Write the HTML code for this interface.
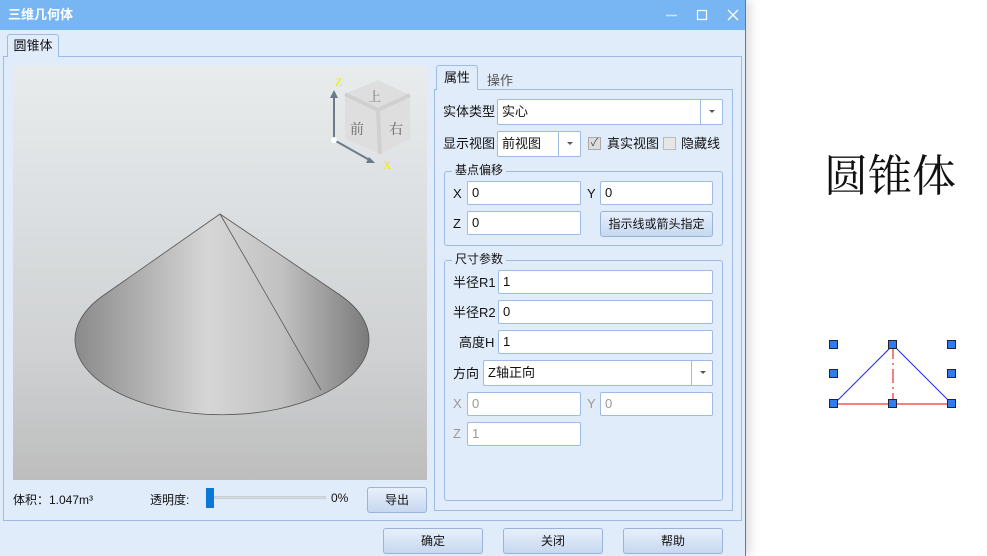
<!DOCTYPE html><html><head><meta charset="utf-8"><style>
*{box-sizing:border-box;margin:0;padding:0}
body{width:987px;height:556px;background:#fff;position:relative;overflow:hidden;font-family:"Liberation Sans","Noto Sans CJK SC",sans-serif;font-size:12px;color:#111}
.a{position:absolute}
.win{left:0;top:0;width:746px;height:556px;background:#e1ecfa;border-right:1px solid #777;box-shadow:4px 0 10px rgba(0,0,0,.15)}
.title{left:0;top:0;width:745px;height:30px;background:#78b6f3;color:#fff;font-weight:bold;font-size:13px;line-height:30px;padding-left:8px}
.inp{background:#fff;border:1px solid #9dbbe3;border-radius:2px;height:24px;line-height:22px;padding-left:4px;font-size:13px}
.lbl{font-size:13px;line-height:24px}
.btn{border:1px solid #9ab3d6;border-radius:3px;background:linear-gradient(#e8f0fb,#c6d8f0);text-align:center;font-size:12px;line-height:24px;height:26px}
.dd{position:absolute;right:0;top:0;width:22px;height:100%;border-left:1px solid #9dbbe3}
.dd:after{content:"";position:absolute;left:8px;top:10px;border:3px solid transparent;border-top:3px solid #556}
.grp{border:1px solid #9dbbe3;border-radius:3px}
.gt{background:#e1ecfa;padding:0 3px;font-size:12px;line-height:14px}
.dis{color:#999}
.h{width:9px;height:9px;background:#2f7bf0;border:1px solid #223}
</style></head><body>
<div class="a win"></div>
<div class="a title">三维几何体</div>
<svg class="a" style="left:660px;top:5px" width="85" height="22">
<path d="M6 10.5 H17" stroke="#cfe3fb" stroke-width="1.5"/>
<rect x="37.5" y="5.5" width="9" height="9" stroke="#fff" fill="none" stroke-width="1.2"/>
<path d="M68 5 L78 15 M78 5 L68 15" stroke="#fff" stroke-width="1.3"/>
</svg>
<div class="a" style="left:3px;top:56px;width:739px;height:465px;border:1px solid #9dbbe3"></div>
<div class="a" style="left:7px;top:34px;width:52px;height:23px;border:1px solid #9dbbe3;border-bottom:none;border-radius:3px 3px 0 0;background:#e1ecfa;font-size:13px;line-height:22px;text-align:center">圆锥体</div>
<div class="a" style="left:13px;top:66px;width:414px;height:414px;background:linear-gradient(#e8ecec,#dde1e3 30%,#cfd1d2 70%,#bdbdbd)"></div>
<svg class="a" style="left:13px;top:66px" width="414" height="414">
<defs><linearGradient id="c" x1="0" x2="1"><stop offset="0" stop-color="#8a8a8a"/><stop offset=".45" stop-color="#d6d6d6"/><stop offset=".7" stop-color="#c2c2c2"/><stop offset="1" stop-color="#7a7a7a"/></linearGradient></defs>
<path d="M207 148 L91 229 A147 75 0 1 0 327 229 Z" fill="url(#c)" stroke="#555" stroke-width=".8"/>
<path d="M207 148 L308 324" stroke="#555" stroke-width=".8"/>
<path d="M332 28 L365 14 L397 29 L397 73 L367 88 L332 73Z" fill="#dedede"/>
<path d="M332 28 L365 44 L397 29 M365 44 L367 88" stroke="#d0d0d0" stroke-width="4" fill="none"/>
<text x="355" y="35" font-size="13" fill="#777" font-family="Liberation Serif,Noto Serif CJK SC,serif">上</text>
<text x="337" y="68" font-size="14" fill="#666" font-family="Liberation Serif,Noto Serif CJK SC,serif">前</text>
<text x="376" y="68" font-size="14" fill="#666" font-family="Liberation Serif,Noto Serif CJK SC,serif">右</text>
<path d="M321 74 V30" stroke="#6d7a8c" stroke-width="2"/><path d="M317 32 L321 24 L325 32Z" fill="#6d7a8c"/>
<path d="M321 74 L360 96" stroke="#6d7a8c" stroke-width="2"/><path d="M356 91 L362 97 L353 97Z" fill="#6d7a8c"/>
<circle cx="321" cy="74" r="3" fill="#fff"/>
<text x="322" y="20" font-size="12" fill="#ee0" font-family="Liberation Serif,serif">Z</text>
<text x="370" y="103" font-size="12" fill="#ee0" font-family="Liberation Serif,serif">X</text>
</svg>
<div class="a" style="left:13px;top:491px;font-size:12px">体积：1.047m³</div>
<div class="a" style="left:150px;top:491px;font-size:12px">透明度:</div>
<div class="a" style="left:214px;top:496px;width:112px;height:3px;background:#d8dde3;border:1px solid #c9ced4"></div>
<div class="a" style="left:206px;top:488px;width:8px;height:20px;background:#0a78d7"></div>
<div class="a" style="left:331px;top:491px;font-size:12px">0%</div>
<div class="a btn" style="left:367px;top:487px;width:60px">导出</div>
<div class="a" style="left:434px;top:89px;width:299px;height:422px;border:1px solid #9dbbe3"></div>
<div class="a" style="left:436px;top:65px;width:42px;height:25px;border:1px solid #9dbbe3;border-bottom:none;border-radius:3px 3px 0 0;background:#e1ecfa;font-size:13px;line-height:24px;text-align:center">属性</div>
<div class="a" style="left:487px;top:70px;font-size:13px;color:#555">操作</div>
<div class="a lbl" style="left:443px;top:100px">实体类型</div>
<div class="a inp" style="left:497px;top:99px;width:226px;height:26px;line-height:24px">实心<div class="dd"></div></div>
<div class="a lbl" style="left:443px;top:132px">显示视图</div>
<div class="a inp" style="left:497px;top:131px;width:84px;height:26px;line-height:24px">前视图<div class="dd"></div></div>
<div class="a" style="left:588px;top:137px;width:13px;height:13px;border:1px solid #aaa;background:#ddd;font-size:11px;line-height:11px;text-align:center;color:#555">✓</div>
<div class="a lbl" style="left:607px;top:132px">真实视图</div>
<div class="a" style="left:663px;top:137px;width:13px;height:13px;border:1px solid #bbb;background:#e6e6e6"></div>
<div class="a lbl" style="left:681px;top:132px">隐藏线</div>
<div class="a grp" style="left:444px;top:171px;width:279px;height:75px"></div>
<div class="a gt" style="left:452px;top:163px">基点偏移</div>
<div class="a lbl" style="left:453px;top:182px">X</div><div class="a inp" style="left:467px;top:181px;width:114px">0</div>
<div class="a lbl" style="left:587px;top:182px">Y</div><div class="a inp" style="left:600px;top:181px;width:113px">0</div>
<div class="a lbl" style="left:453px;top:212px">Z</div><div class="a inp" style="left:467px;top:211px;width:114px">0</div>
<div class="a btn" style="left:600px;top:211px;width:113px;font-size:12px">指示线或箭头指定</div>
<div class="a grp" style="left:444px;top:260px;width:279px;height:241px"></div>
<div class="a gt" style="left:452px;top:252px">尺寸参数</div>
<div class="a lbl" style="left:453px;top:271px">半径R1</div><div class="a inp" style="left:498px;top:270px;width:215px">1</div>
<div class="a lbl" style="left:453px;top:301px">半径R2</div><div class="a inp" style="left:498px;top:300px;width:215px">0</div>
<div class="a lbl" style="left:459px;top:331px">高度H</div><div class="a inp" style="left:498px;top:330px;width:215px">1</div>
<div class="a lbl" style="left:453px;top:362px">方向</div>
<div class="a inp" style="left:483px;top:360px;width:230px;height:26px;line-height:24px">Z轴正向<div class="dd" style="width:21px"></div></div>
<div class="a lbl dis" style="left:453px;top:392px">X</div><div class="a inp dis" style="left:467px;top:392px;width:114px">0</div>
<div class="a lbl dis" style="left:587px;top:392px">Y</div><div class="a inp dis" style="left:600px;top:392px;width:113px">0</div>
<div class="a lbl dis" style="left:453px;top:422px">Z</div><div class="a inp dis" style="left:467px;top:422px;width:114px">1</div>
<div class="a btn" style="left:383px;top:528px;width:100px">确定</div>
<div class="a btn" style="left:503px;top:528px;width:100px">关闭</div>
<div class="a btn" style="left:623px;top:528px;width:100px">帮助</div>
<div class="a" style="left:824px;top:144px;font-size:44px;font-family:'Noto Serif CJK SC',serif;color:#111;line-height:56px">圆锥体</div>
<svg class="a" style="left:820px;top:330px" width="150" height="90">
<path d="M14 74 H132" stroke="#e00" stroke-width="1"/>
<path d="M73 15 V74" stroke="#e00" stroke-dasharray="14 4 2 4"/>
<path d="M14 74 L73 15 L132 74" stroke="#22f" fill="none"/>
</svg>
<div class="a h" style="left:829px;top:340px"></div><div class="a h" style="left:888px;top:340px"></div><div class="a h" style="left:947px;top:340px"></div>
<div class="a h" style="left:829px;top:369px"></div><div class="a h" style="left:947px;top:369px"></div>
<div class="a h" style="left:829px;top:399px"></div><div class="a h" style="left:888px;top:399px"></div><div class="a h" style="left:947px;top:399px"></div>
</body></html>
